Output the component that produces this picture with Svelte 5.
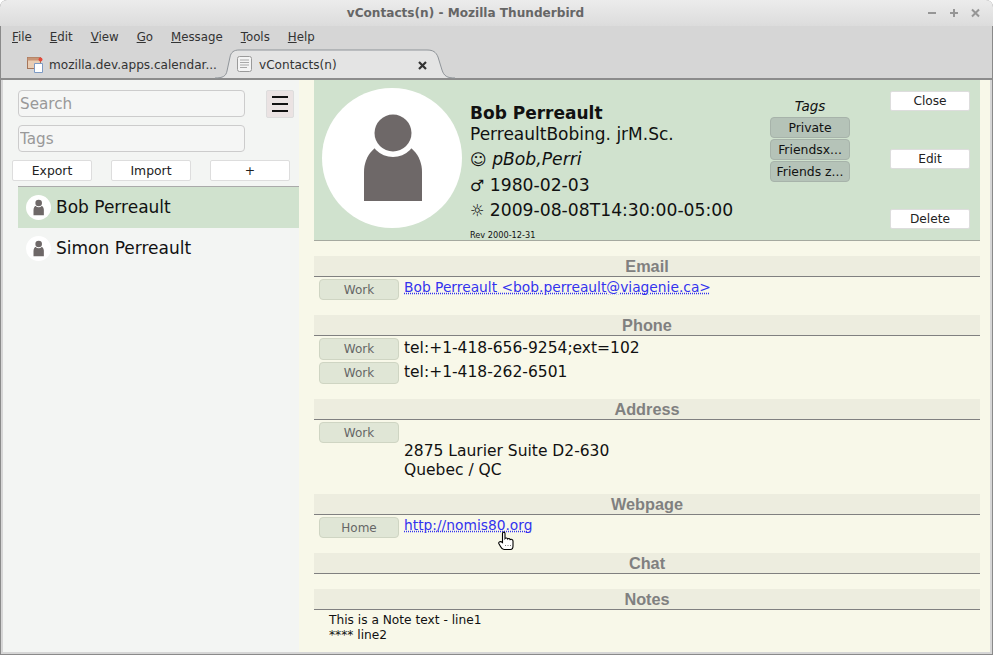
<script lang="ts">
  const menus = [
    ["F", "ile"],
    ["E", "dit"],
    ["V", "iew"],
    ["G", "o"],
    ["M", "essage"],
    ["T", "ools"],
    ["H", "elp"]
  ];
  const contacts = [
    { name: "Bob Perreault", selected: true },
    { name: "Simon Perreault", selected: false }
  ];
  const tags = ["Private", "Friendsx...", "Friends z..."];
</script>

{#snippet person(size: number)}
  <svg class="avatar" width={size} height={size} viewBox="0 0 140 140" aria-hidden="true">
    <circle cx="70" cy="70" r="70" fill="#fff" />
    <path d="M42 113V84C42 67 54 54 71 54S100 67 100 84V113Z" fill="#6e6868" />
    <circle cx="71" cy="45" r="24" fill="#fff" />
    <circle cx="71" cy="45" r="18.5" fill="#6e6868" />
  </svg>
{/snippet}

<div class="window">
  <header class="titlebar">
    <span class="title">vContacts(n) - Mozilla Thunderbird</span>
    <div class="winbtns">
      <svg width="60" height="12" viewBox="0 0 60 12" aria-hidden="true">
        <g stroke="#969696" stroke-width="2" fill="none">
          <path d="M1 6H9" />
          <path d="M23 6H31M27 2V10" />
          <path d="M45 2.5L52 9.5M52 2.5L45 9.5" />
        </g>
      </svg>
    </div>
  </header>

  <nav class="menubar">
    {#each menus as m}
      <span><u>{m[0]}</u>{m[1]}</span>
    {/each}
  </nav>

  <div class="tabbar">
    <div class="tab">
      <svg width="17" height="17" viewBox="0 0 17 17" aria-hidden="true">
        <rect x="0.5" y="1.5" width="13" height="11" fill="#e9cdb4" stroke="#a5755a" />
        <rect x="0.5" y="1.5" width="13" height="3" fill="#c79677" />
        <path d="M7.5 7.5H15.5V16.5H7.5Z" fill="#fff" stroke="#7d9ac4" />
        <circle cx="13.5" cy="3.5" r="2" fill="#e4483a" />
      </svg>
      <span>mozilla.dev.apps.calendar...</span>
    </div>
    <div class="tab active">
      <svg class="tabshape" width="240" height="30" viewBox="0 0 240 30" aria-hidden="true">
        <path
          d="M0 29C8 29 11 27 12 22L15 8C16 3 19 1 24 1H212C218 1 221 3 223 8L227 21C229 27 232 29 240 29"
          fill="#e4e4e4"
          stroke="#8f9499"
        />
      </svg>
      <svg class="pageicon" width="16" height="16" viewBox="0 0 16 16" aria-hidden="true">
        <rect x="0.5" y="0.5" width="14" height="15" rx="2" fill="#f4f4f4" stroke="#9a9a9a" />
        <path d="M3 4H12M3 6.5H12M3 9H12M3 11.5H10" stroke="#a8a8a8" />
      </svg>
      <span>vContacts(n)</span>
      <svg class="tabclose" width="9" height="9" viewBox="0 0 9 9" aria-hidden="true">
        <path d="M1 1L8 8M8 1L1 8" stroke="#333" stroke-width="2.2" />
      </svg>
    </div>
  </div>

  <div class="content">
    <aside class="sidebar">
      <div class="searchrow">
        <input placeholder="Search" />
        <button class="menu" aria-label="Menu"><i></i><i></i><i></i></button>
      </div>
      <input class="tagsinput" placeholder="Tags" />
      <div class="actions">
        <button>Export</button>
        <button>Import</button>
        <button>+</button>
      </div>
      <ul class="list">
        {#each contacts as c}
          <li class:selected={c.selected}>
            {@render person(25)}
            <span>{c.name}</span>
          </li>
        {/each}
      </ul>
    </aside>

    <main class="detail">
      <section class="card">
        {@render person(140)}
        <div class="identity">
          <strong>Bob Perreault</strong>
          <div class="org">PerreaultBobing. jrM.Sc.</div>
          <div class="line nick"><span class="sym">☺</span> <em>pBob,Perri</em></div>
          <div class="line"><span class="sym">♂</span> 1980-02-03</div>
          <div class="line"><span class="sym">☼</span> 2009-08-08T14:30:00-05:00</div>
          <small>Rev 2000-12-31</small>
        </div>
        <div class="tags">
          <em>Tags</em>
          {#each tags as t}
            <span class="pill">{t}</span>
          {/each}
        </div>
        <div class="cardbtns">
          <button>Close</button>
          <button>Edit</button>
          <button>Delete</button>
        </div>
      </section>

      <section class="group">
        <h2>Email</h2>
        <div class="row">
          <span class="kind">Work</span>
          <a href="#mail">Bob Perreault &lt;bob.perreault@viagenie.ca&gt;</a>
        </div>
      </section>

      <section class="group">
        <h2>Phone</h2>
        <div class="row tel"><span class="kind">Work</span><span>tel:+1-418-656-9254;ext=102</span></div>
        <div class="row tel"><span class="kind">Work</span><span>tel:+1-418-262-6501</span></div>
      </section>

      <section class="group">
        <h2>Address</h2>
        <div class="row">
          <span class="kind">Work</span>
          <div class="addr">2875 Laurier Suite D2-630<br />Quebec / QC</div>
        </div>
      </section>

      <section class="group">
        <h2>Webpage</h2>
        <div class="row web">
          <span class="kind">Home</span>
          <a href="#web">http://nomis80.org</a>
          <svg class="cursor" width="17" height="20" viewBox="0 0 17 20" aria-hidden="true">
            <path
              d="M4.5 11.5V2.5C4.5 0.6 7 0.6 7 2.5V7.5C7.5 6.8 9.5 6.8 9.7 8C10.3 7.3 12 7.4 12.2 8.6C13 8 15 8.2 15 10V15C15 17 14 18.5 12.5 18.5H6C4.5 18.5 3.5 17.5 2.5 15.5L0.8 12.5C0.3 11 2.5 9.8 4.5 11.5Z"
              fill="#fff"
              stroke="#000"
              stroke-width="1.1"
            />
            <path d="M7 14.5H8M9.5 14.5H10.5M12 14.5H13" stroke="#777" />
          </svg>
        </div>
      </section>

      <section class="group">
        <h2>Chat</h2>
      </section>

      <section class="group notes">
        <h2>Notes</h2>
        <p>This is a Note text - line1<br />**** line2</p>
      </section>
    </main>
  </div>
</div>

<style>
  :global(body) {
    margin: 0;
    background: #fff;
  }

  .window {
    width: 993px;
    height: 655px;
    box-sizing: border-box;
    display: flex;
    flex-direction: column;
    overflow: hidden;
    border-radius: 7px 7px 0 0;
    background: #d6d6d6;
    box-shadow: inset 0 0 0 1px #8a8a8a;
    font-family: "DejaVu Sans", sans-serif;
    color: #111;
  }

  .titlebar {
    height: 26px;
    flex: none;
    position: relative;
    display: flex;
    justify-content: center;
    align-items: center;
    padding-right: 62px;
    background: linear-gradient(#ececec, #dcdcdc);
  }

  .title {
    font-size: 12.1px;
    font-weight: 700;
    color: #666;
  }

  .winbtns {
    position: absolute;
    right: 6px;
    top: 7px;
    line-height: 0;
  }

  .menubar {
    height: 22px;
    flex: none;
    display: flex;
    gap: 18px;
    align-items: center;
    padding-left: 12px;
    font-size: 11.8px;
    color: #333;
  }

  .tabbar {
    height: 32px;
    flex: none;
    box-sizing: border-box;
    display: flex;
    padding-left: 27px;
    border-bottom: 2px solid #8c8c8c;
    font-size: 12.1px;
    color: #333;
  }

  .tab {
    display: flex;
    align-items: center;
    gap: 5px;
    width: 201px;
    height: 28px;
    margin-top: 2px;
    flex: none;
  }

  .tab span {
    margin-top: 2px;
  }

  .tab.active {
    position: relative;
    width: 225px;
    padding-left: 9px;
    box-sizing: border-box;
    gap: 6px;
  }

  .tabshape {
    position: absolute;
    left: -13px;
    top: -1px;
  }

  .tab.active span,
  .pageicon {
    position: relative;
  }

  .tabclose {
    position: absolute;
    left: 190px;
    top: 11px;
  }

  .content {
    flex: 1;
    min-height: 0;
    display: flex;
    margin: 0 3px 3px;
    background: #f8f8e9;
  }

  .sidebar {
    width: 296px;
    flex: none;
    box-sizing: border-box;
    padding: 10px 0 0 15px;
    background: #f3f5f3;
  }

  .searchrow {
    display: flex;
    gap: 21px;
    align-items: flex-start;
  }

  input {
    width: 227px;
    height: 27px;
    box-sizing: border-box;
    padding: 0 1px;
    border: 1px solid #ccc;
    border-radius: 4px;
    background: #f5f6f5;
    font: 15.2px "DejaVu Sans", sans-serif;
    display: block;
  }

  input::placeholder {
    color: #999;
    opacity: 1;
  }

  .tagsinput {
    margin-top: 7px;
  }

  button {
    height: 21px;
    width: 80px;
    flex: none;
    box-sizing: border-box;
    padding: 0;
    border: 1px solid #ddd;
    border-radius: 2px;
    background: #fff;
    font: 12.4px "DejaVu Sans", sans-serif;
    color: #222;
  }

  .menu {
    width: 28px;
    height: 28px;
    display: flex;
    flex-direction: column;
    gap: 5px;
    align-items: center;
    justify-content: center;
    background: #ebe3e3;
    border-color: #ddd;
  }

  .menu i {
    display: block;
    width: 16px;
    height: 2px;
    background: #111;
  }

  .actions {
    display: flex;
    gap: 19px;
    margin: 8px 0 5px -6px;
  }

  .list {
    list-style: none;
    margin: 0;
    padding: 0;
    border-top: 1px solid #aaa;
    font-size: 17px;
  }

  .list li {
    height: 41px;
    display: flex;
    align-items: center;
    gap: 5px;
    padding-left: 8px;
  }

  .list li span {
    margin-bottom: 2px;
  }

  .list li.selected {
    background: #d0e2ce;
  }

  .detail {
    flex: 1;
    min-width: 0;
    margin: 0 10px 0 15px;
  }

  .card {
    height: 161px;
    box-sizing: border-box;
    display: flex;
    position: relative;
    padding: 8px 0 0 8px;
    margin-bottom: 15px;
    background: #d0e2ce;
    border-bottom: 1px solid #a5a99f;
  }

  .avatar {
    flex: none;
    display: block;
  }

  .identity {
    width: 300px;
    margin-left: 8px;
    padding-top: 14px;
    font-size: 17px;
    line-height: 22px;
  }

  .identity strong {
    display: block;
    height: 21px;
  }

  .line {
    height: 25px;
    line-height: 25px;
    white-space: nowrap;
    font-size: 17.2px;
  }

  .nick {
    margin: 2px 0 1px;
  }

  .sym {
    font-size: 16px;
  }

  .identity small {
    display: block;
    margin-top: 6px;
    font-size: 8.2px;
    line-height: 12px;
  }

  .tags {
    width: 80px;
    padding-top: 8px;
    display: flex;
    flex-direction: column;
    align-items: stretch;
    gap: 1px;
    text-align: center;
    font-size: 13.5px;
  }

  .tags em {
    line-height: 20px;
  }

  .pill {
    height: 21px;
    box-sizing: border-box;
    border: 1px solid #a7b3aa;
    border-radius: 4px;
    background: #b5c3b8;
    font-size: 12.4px;
    line-height: 19px;
  }

  .cardbtns {
    margin-left: 40px;
    padding-top: 3px;
    display: flex;
    flex-direction: column;
    gap: 38px;
  }

  .cardbtns button {
    height: 20px;
    font-size: 12.2px;
  }

  .cardbtns button:last-child {
    margin-top: 2px;
  }

  .group {
    padding-bottom: 15px;
    font-size: 15.5px;
  }

  h2 {
    margin: 0;
    height: 21px;
    box-sizing: border-box;
    background: #ededdf;
    border-bottom: 1px solid #808080;
    text-align: center;
    font: 700 16.3px/21px "Liberation Sans", sans-serif;
    color: #808080;
  }

  .row {
    display: flex;
    gap: 5px;
    align-items: flex-start;
    padding: 2px 0 0 5px;
    line-height: 20px;
    position: relative;
  }

  .row.tel {
    min-height: 22px;
  }

  .row.tel .kind {
    height: 22px;
    line-height: 21px;
  }

  .kind {
    width: 80px;
    height: 21px;
    flex: none;
    box-sizing: border-box;
    border: 1px solid #cfd5c3;
    border-radius: 4px;
    background: #e0e6d6;
    text-align: center;
    font-size: 12px;
    line-height: 20px;
    color: #666;
  }

  .addr {
    margin: 20px 0 -1px;
    line-height: 19px;
  }

  a {
    color: #3333ee;
    font-size: 13.8px;
    line-height: 16px;
    text-decoration: underline dotted;
  }

  .cursor {
    position: absolute;
    left: 184px;
    top: 16px;
  }

  .notes p {
    margin: 3px 0 0 15px;
    font-size: 12.2px;
    line-height: 15px;
  }
</style>
